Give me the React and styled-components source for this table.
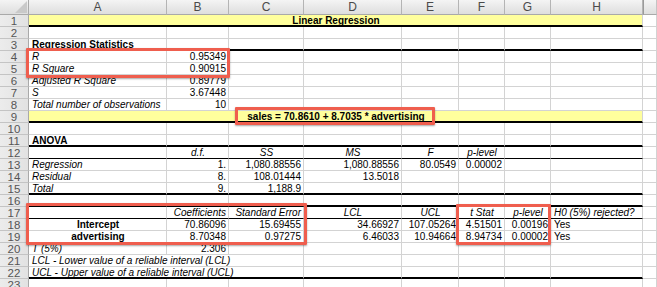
import React from 'react'
import styled, { createGlobalStyle, css } from 'styled-components'

const GlobalStyle = createGlobalStyle`
  html, body {
    margin: 0;
    padding: 0;
    background: #fff;
    overflow: hidden;
  }
`

const letters = ['A', 'B', 'C', 'D', 'E', 'F', 'G', 'H', '']

// each row: cells for A..H, bottom border kind
const rows = [
  { border: 'thick', cells: [{ text: 'Linear Regression', span: 8, bold: true, align: 'center', fill: true }] },
  {},
  { border: 'thick', cells: [{ text: 'Regression Statistics', bold: true }] },
  { cells: [{ text: 'R', italic: true }, { text: '0.95349', align: 'right' }] },
  { cells: [{ text: 'R Square', italic: true }, { text: '0.90915', align: 'right' }] },
  { cells: [{ text: 'Adjusted R Square', italic: true }, { text: '0.89779', align: 'right' }] },
  { cells: [{ text: 'S', italic: true }, { text: '3.67448', align: 'right' }] },
  { cells: [{ text: 'Total number of observations', italic: true }, { text: '10', align: 'right' }] },
  { border: 'thick', cells: [{ text: 'sales = 70.8610 + 8.7035 * advertising', span: 8, bold: true, align: 'center', fill: true }] },
  {},
  { border: 'thick', cells: [{ text: 'ANOVA', bold: true }] },
  {
    border: 'thin',
    cells: [
      {},
      { text: 'd.f.', italic: true, align: 'center' },
      { text: 'SS', italic: true, align: 'center' },
      { text: 'MS', italic: true, align: 'center' },
      { text: 'F', italic: true, align: 'center' },
      { text: 'p-level', italic: true, align: 'center' },
    ],
  },
  {
    cells: [
      { text: 'Regression', italic: true },
      { text: '1.', align: 'right' },
      { text: '1,080.88556', align: 'right' },
      { text: '1,080.88556', align: 'right' },
      { text: '80.0549', align: 'right' },
      { text: '0.00002', align: 'right' },
    ],
  },
  {
    cells: [
      { text: 'Residual', italic: true },
      { text: '8.', align: 'right' },
      { text: '108.01444', align: 'right' },
      { text: '13.5018', align: 'right' },
    ],
  },
  {
    border: 'thick',
    cells: [
      { text: 'Total', italic: true },
      { text: '9.', align: 'right' },
      { text: '1,188.9', align: 'right' },
    ],
  },
  { border: 'thick' },
  {
    border: 'thin',
    cells: [
      {},
      { text: 'Coefficients', italic: true, align: 'right' },
      { text: 'Standard Error', italic: true, align: 'right' },
      { text: 'LCL', italic: true, align: 'center' },
      { text: 'UCL', italic: true, align: 'center' },
      { text: 't Stat', italic: true, align: 'center' },
      { text: 'p-level', italic: true, align: 'center' },
      { text: 'H0 (5%) rejected?', italic: true },
    ],
  },
  {
    cells: [
      { text: 'Intercept', bold: true, align: 'center' },
      { text: '70.86096', align: 'right' },
      { text: '15.69455', align: 'right' },
      { text: '34.66927', align: 'right' },
      { text: '107.05264', align: 'right' },
      { text: '4.51501', align: 'right' },
      { text: '0.00196', align: 'right' },
      { text: 'Yes' },
    ],
  },
  {
    cells: [
      { text: 'advertising', bold: true, align: 'center' },
      { text: '8.70348', align: 'right' },
      { text: '0.97275', align: 'right' },
      { text: '6.46033', align: 'right' },
      { text: '10.94664', align: 'right' },
      { text: '8.94734', align: 'right' },
      { text: '0.00002', align: 'right' },
      { text: 'Yes' },
    ],
  },
  { cells: [{ text: 'T (5%)', italic: true }, { text: '2.306', align: 'right' }] },
  { cells: [{ text: 'LCL - Lower value of a reliable interval (LCL)', italic: true, span: 3 }] },
  { border: 'thick', cells: [{ text: 'UCL - Upper value of a reliable interval (UCL)', italic: true, span: 3 }] },
  {},
]

// red annotation frames drawn over the sheet
const marks = [
  { left: 26, top: 48, width: 204, height: 30 },
  { left: 235, top: 107, width: 200, height: 18 },
  { left: 26, top: 203, width: 281, height: 42 },
  { left: 456, top: 204, width: 95, height: 41 },
]

function fillRow(cells = []) {
  const out = []
  let used = 0
  cells.forEach((c) => {
    out.push(c)
    used += c.span || 1
  })
  while (used < 8) {
    out.push({})
    used++
  }
  return out
}

export default function App() {
  return (
    <>
      <GlobalStyle />
      <Sheet>
        <Corner>
          <svg width="14" height="14" viewBox="0 0 14 14">
            <polygon points="13,1 13,13 1,13" fill="#c9c9c9" />
          </svg>
        </Corner>
        {letters.map((l, i) => (
          <ColHead key={i} $last={i === 8}>{l}</ColHead>
        ))}
        {rows.map((row, r) => (
          <React.Fragment key={r}>
            <RowHead>{r + 1}</RowHead>
            {fillRow(row.cells).map((c, i) => (
              <Cell
                key={i}
                $span={c.span}
                $align={c.align}
                $bold={c.bold}
                $italic={c.italic}
                $fill={c.fill}
                $border={row.border}
              >
                {c.text}
              </Cell>
            ))}
            <Cell />
          </React.Fragment>
        ))}
        {marks.map((m, i) => (
          <Mark key={i} style={m} />
        ))}
      </Sheet>
    </>
  )
}

const Sheet = styled.div`
  position: relative;
  display: grid;
  grid-template-columns: 29px 138px 62px 75px 98px 57px 46px 46px 92px 1fr;
  grid-template-rows: 15px;
  grid-auto-rows: 12px;
  width: 100%;
  height: 287px;
  overflow: hidden;
  font-family: "Liberation Sans", Arial, sans-serif;
  font-size: 10px;
  color: #000;
`

const headBg = css`
  background: linear-gradient(#f4f4f4, #dedede);
  color: #4a4a4a;
  font-family: "Liberation Sans", Arial, sans-serif;
  font-size: 12px;
  box-sizing: border-box;
`

const Corner = styled.div`
  ${headBg};
  border-right: 1px solid #a9a9a9;
  border-bottom: 1px solid #a9a9a9;
  display: flex;
  align-items: flex-end;
  justify-content: flex-end;
  svg {
    display: block;
  }
`

const ColHead = styled.div`
  ${headBg};
  border-right: 1px solid ${(p) => (p.$last ? '#c4c4c4' : '#b4b4b4')};
  border-bottom: 1px solid #a9a9a9;
  text-align: center;
  line-height: 14px;
  &:nth-child(10) {
    border-left: 1px solid #9a9a9a;
  }
`

const RowHead = styled.div`
  ${headBg};
  background: linear-gradient(90deg, #ececec, #e2e2e2);
  border-right: 1px solid #a9a9a9;
  border-bottom: 1px solid #c4c4c4;
  text-align: center;
  line-height: 12px;
  font-size: 11.5px;
  color: #555;
`

const Cell = styled.div`
  grid-column: span ${(p) => p.$span || 1};
  box-sizing: border-box;
  border-right: 1px solid #d3d3d3;
  border-bottom: ${(p) =>
    p.$border === 'thick'
      ? '2px solid #000'
      : p.$border === 'thin'
      ? '1px solid #000'
      : '1px solid #d3d3d3'};
  background: ${(p) => (p.$fill ? '#ffff9d' : '#fff')};
  text-align: ${(p) => p.$align || 'left'};
  font-weight: ${(p) => (p.$bold ? 700 : 400)};
  font-style: ${(p) => (p.$italic ? 'italic' : 'normal')};
  padding: 0 2px 0 3px;
  line-height: 12px;
  white-space: nowrap;
  overflow: visible;
  min-width: 0;
`

const Mark = styled.div`
  position: absolute;
  box-sizing: border-box;
  border: 3px solid #ef5e4e;
  border-radius: 1px;
  box-shadow: 0 1px 2px rgba(0, 0, 0, 0.35);
  pointer-events: none;
`
